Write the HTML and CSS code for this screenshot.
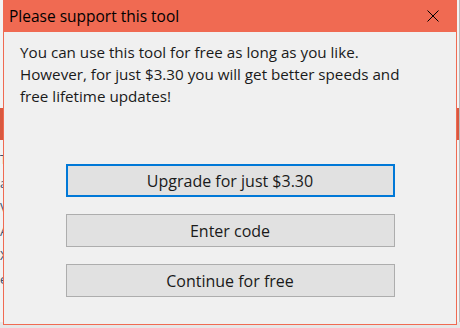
FILE: index.html
```html
<!DOCTYPE html>
<html lang="en">
<head>
    <meta charset="UTF-8">
    <title>Please support this tool</title>
    <link rel="stylesheet" href="styles.css">
</head>
<body>
    <!-- window behind the dialog -->
    <div class="back-window">
        <div class="back-bar"></div>
        <div class="back-text">
            <span>T</span>
            <span>a</span>
            <span>V</span>
            <span>A</span>
            <span>X</span>
            <span>e</span>
        </div>
    </div>

    <div class="dialog">
        <div class="title-bar">
            <span class="title">Please support this tool</span>
            <button class="close-btn" aria-label="Close">
                <svg width="12" height="12" viewBox="0 0 12 12">
                    <path d="M0.5 0.5 L11.5 11.5 M11.5 0.5 L0.5 11.5" stroke="#000" stroke-width="1" fill="none"/>
                </svg>
            </button>
        </div>
        <div class="dialog-body">
            <p class="message">
                You can use this tool for free as long as you like.<br>
                However, for just $3.30 you will get better speeds and<br>
                free lifetime updates!
            </p>
            <div class="actions">
                <button class="btn btn-default">Upgrade for just $3.30</button>
                <button class="btn">Enter code</button>
                <button class="btn">Continue for free</button>
            </div>
        </div>
    </div>
</body>
</html>
```

FILE: styles.css
```css
* {
    margin: 0;
    padding: 0;
    box-sizing: border-box;
}

body {
    width: 460px;
    height: 328px;
    overflow: hidden;
    position: relative;
    background: #e6e6e6;
    font-family: 'Open Sans', 'Noto Sans', sans-serif;
    color: #1a1a1a;
}

.back-window {
    position: absolute;
    left: 0;
    top: 0;
    width: 460px;
    height: 322px;
    background: #f3f3f3;
    border-right: 1px solid #bbb;
}

.back-bar {
    margin-top: 108px;
    height: 32px;
    background: #d9583f;
}

.back-text {
    display: flex;
    flex-direction: column;
    gap: 6px;
    padding: 10px 0 0 0;
    font-size: 13px;
    color: #3a5070;
}

.dialog {
    position: absolute;
    left: 3px;
    top: 0;
    width: 454px;
    height: 325px;
    display: flex;
    flex-direction: column;
    background: #f0f0f0;
    border: 1px solid #f06a52;
    border-top: none;
}

.title-bar {
    height: 32px;
    margin: 0 -1px;
    background: #f06a52;
    display: flex;
    align-items: center;
    justify-content: space-between;
    padding-left: 6px;
}

.title {
    font-size: 15.5px;
    color: #000;
}

.close-btn {
    width: 46px;
    height: 32px;
    border: none;
    background: transparent;
    display: flex;
    align-items: center;
    justify-content: center;
    margin-right: 1px;
}

.dialog-body {
    flex: 1;
    padding: 9px 16px 0;
}

.message {
    font-size: 15.2px;
    line-height: 22px;
    color: #1a1a1a;
}

.actions {
    display: flex;
    flex-direction: column;
    align-items: center;
    gap: 17px;
    margin-top: 57px;
}

.btn {
    width: 329px;
    height: 33px;
    background: #e1e1e1;
    border: 1px solid #adadad;
    font-family: inherit;
    font-size: 16px;
    color: #1a1a1a;
}

.btn-default {
    border: 2px solid #0078d7;
}
```
